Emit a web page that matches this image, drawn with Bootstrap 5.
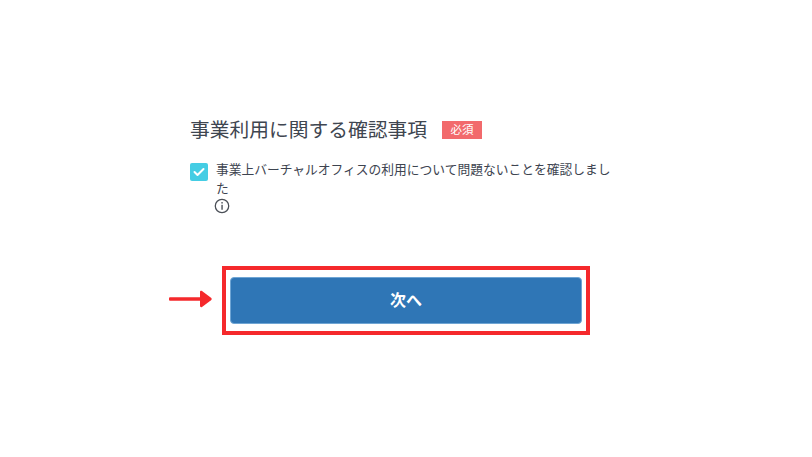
<!DOCTYPE html>
<html lang="ja">
<head>
<meta charset="utf-8">
<title>確認事項</title>
<link href="https://cdn.jsdelivr.net/npm/bootstrap@5.3.0/dist/css/bootstrap.min.css" rel="stylesheet">
<style>
html, body { height: 100%; }
body { background: #fff; font-family: "Noto Sans CJK JP", "Noto Sans", sans-serif; color: #3d4450; overflow: hidden; }
.page-wrap { width: 812px; height: 457px; padding-top: 116px; }
.form-col { width: 424px; margin-left: 190px; }
.sec-title { font-size: 19.75px; line-height: 26px; font-weight: 400; margin: 0; color: #3f4650; }
.req-tag { background: #f26a6c; color: #fff; font-size: 11.5px; line-height: 17px; width: 40px; height: 18px; margin-left: 15px; margin-top: 1px; font-weight: 400; }
.check-row { margin-top: 18px; }
.check-box { width: 18px; height: 18px; border-radius: 2px; background: #45cde4; margin-top: 3px; margin-right: 8px; flex: none; }
.check-text { font-size: 12.75px; line-height: 18.5px; width: 400px; margin-top: 0; }
.info-ic { display: block; margin-top: 1px; margin-left: -2px; }
.cta-row { margin-top: 52px; margin-left: 169px; }
.arrow-ic { flex: none; margin-right: 10px; margin-top: -3px; }
.cta-frame { border: 4px solid #f5292c; width: 368px; height: 69px; padding: 7px 4px; }
.cta-btn { width: 352px; height: 47px; background: #2f76b6; border: 1px solid #6fa5d4; border-radius: 4px; color: #fff; font-size: 16px; font-weight: 700; padding: 0 0 3px; }
.cta-btn:hover { background: #2f76b6; color: #fff; border-color: #6fa5d4; }
</style>
</head>
<body>
<div class="page-wrap">
  <div class="form-col">
    <div class="d-flex align-items-center">
      <h2 class="sec-title">事業利用に関する確認事項</h2>
      <span class="req-tag d-inline-flex justify-content-center align-items-center">必須</span>
    </div>
    <div class="check-row d-flex">
      <span class="check-box d-flex justify-content-center align-items-center">
        <svg width="12" height="10" viewBox="0 0 12 10" fill="none"><path d="M1.5 5l3 3 6-6" stroke="#fff" stroke-width="2" stroke-linecap="round" stroke-linejoin="round"/></svg>
      </span>
      <div class="check-text">
        事業上バーチャルオフィスの利用について問題ないことを確認しました
        <svg class="info-ic" width="16" height="16" viewBox="0 0 15 15" fill="none"><circle cx="7.5" cy="7.5" r="6.3" stroke="#4a4f57" stroke-width="1.2"/><rect x="6.9" y="6.4" width="1.3" height="4.6" fill="#4a4f57"/><rect x="6.9" y="3.8" width="1.3" height="1.4" fill="#4a4f57"/></svg>
      </div>
    </div>
  </div>
  <div class="cta-row d-flex align-items-center">
    <svg class="arrow-ic" width="43" height="18" viewBox="0 0 43 18"><rect x="0" y="7.2" width="32" height="3.6" rx="1" fill="#f5292c"/><path d="M31 2.2c0-1.2 1-1.7 2-1.1l9 6.6c.9.7.9 1.9 0 2.6l-9 6.6c-1 .6-2 .1-2-1.1z" fill="#f5292c"/></svg>
    <div class="cta-frame">
      <button type="button" class="btn cta-btn d-block">次へ</button>
    </div>
  </div>
</div>
<script src="https://cdn.jsdelivr.net/npm/bootstrap@5.3.0/dist/js/bootstrap.bundle.min.js"></script>
</body>
</html>
